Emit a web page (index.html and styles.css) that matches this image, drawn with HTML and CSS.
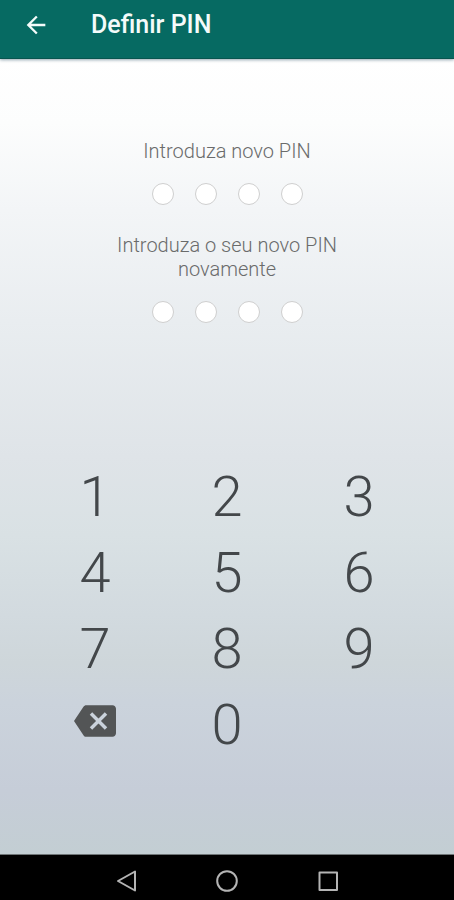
FILE: index.html
```html
<!DOCTYPE html>
<html lang="pt">
<head>
    <meta charset="UTF-8">
    <meta name="viewport" content="width=device-width, initial-scale=1.0">
    <title>Definir PIN</title>
    <link rel="stylesheet" href="styles.css">
</head>
<body>
    <header class="app-bar">
        <button type="button" class="back-button" aria-label="Voltar">
            <svg width="28" height="28" viewBox="0 0 24 24"><path d="M20 11H7.83l5.59-5.59L12 4l-8 8 8 8 1.41-1.41L7.83 13H20v-2z"/></svg>
        </button>
        <h1 class="app-title">Definir PIN</h1>
    </header>

    <main class="content">
        <form class="pin-form">
            <!-- New PIN -->
            <div class="pin-group" role="group" aria-labelledby="new-pin">
                <label class="pin-label" id="new-pin" for="new-1">Introduza novo PIN</label>
                <div class="pin-dots">
                    <input type="password" class="pin-dot" id="new-1" maxlength="1" inputmode="none">
                    <input type="password" class="pin-dot" aria-labelledby="new-pin" maxlength="1" inputmode="none">
                    <input type="password" class="pin-dot" aria-labelledby="new-pin" maxlength="1" inputmode="none">
                    <input type="password" class="pin-dot" aria-labelledby="new-pin" maxlength="1" inputmode="none">
                </div>
            </div>

            <!-- Confirm PIN -->
            <div class="pin-group" role="group" aria-labelledby="confirm-pin">
                <label class="pin-label" id="confirm-pin" for="confirm-1">Introduza o seu novo PIN novamente</label>
                <div class="pin-dots">
                    <input type="password" class="pin-dot" id="confirm-1" maxlength="1" inputmode="none">
                    <input type="password" class="pin-dot" aria-labelledby="confirm-pin" maxlength="1" inputmode="none">
                    <input type="password" class="pin-dot" aria-labelledby="confirm-pin" maxlength="1" inputmode="none">
                    <input type="password" class="pin-dot" aria-labelledby="confirm-pin" maxlength="1" inputmode="none">
                </div>
            </div>
        </form>

        <!-- Keypad -->
        <div class="keypad">
            <button type="button" class="key">1</button>
            <button type="button" class="key">2</button>
            <button type="button" class="key">3</button>
            <button type="button" class="key">4</button>
            <button type="button" class="key">5</button>
            <button type="button" class="key">6</button>
            <button type="button" class="key">7</button>
            <button type="button" class="key">8</button>
            <button type="button" class="key">9</button>
            <button type="button" class="key key-delete" aria-label="Apagar">
                <svg width="42" height="42" viewBox="0 0 24 24"><path d="M22 3H7c-.69 0-1.23.35-1.59.88L0 12l5.41 8.11c.36.53.9.89 1.59.89h15c1.1 0 2-.9 2-2V5c0-1.1-.9-2-2-2zm-3 12.59L17.59 17 14 13.41 10.41 17 9 15.59 12.59 12 9 8.41 10.41 7 14 10.59 17.59 7 19 8.41 15.41 12 19 15.59z"/></svg>
            </button>
            <button type="button" class="key">0</button>
        </div>
    </main>

    <!-- System navigation -->
    <nav class="nav-bar">
        <button type="button" class="nav-button" aria-label="Anterior">
            <svg width="24" height="24" viewBox="0 0 24 24"><path d="M21 2.5v19L4 12z"/></svg>
        </button>
        <button type="button" class="nav-button" aria-label="Início">
            <svg width="24" height="24" viewBox="0 0 24 24"><circle cx="12" cy="12" r="9.8"/></svg>
        </button>
        <button type="button" class="nav-button" aria-label="Recentes">
            <svg width="24" height="24" viewBox="0 0 24 24"><rect x="3.5" y="3.5" width="17.5" height="17.5"/></svg>
        </button>
    </nav>
</body>
</html>
```
FILE: styles.css
```css
* {
    box-sizing: border-box;
}
body {
    font-family: Roboto, "Liberation Sans", sans-serif;
    margin: 0;
    min-height: 100vh;
    display: flex;
    flex-direction: column;
    background: #000;
}
button {
    font-family: inherit;
    border: none;
    background: none;
    padding: 0;
    display: flex;
    align-items: center;
    justify-content: center;
    cursor: pointer;
}

/* Top bar */
.app-bar {
    display: flex;
    align-items: center;
    gap: 41px;
    padding: 9px 22px 17px;
    background: #066a62;
    border-bottom: 1px solid #07554f;
    box-shadow: 0 1px 3px rgba(40, 80, 100, 0.5);
    z-index: 1;
}
.back-button svg {
    fill: #f4fbfa;
}
.app-title {
    margin: 0;
    font-size: 25px;
    line-height: 32px;
    font-weight: 500;
    color: #f4fbfa;
}

.content {
    flex: 1;
    display: flex;
    flex-direction: column;
    justify-content: space-between;
    gap: 40px;
    padding: 80px 29px 93px;
    background: linear-gradient(#ffffff 0%, #fcfdfd 8%, #f3f5f7 19%, #e9edf0 33%, #dfe4e8 50%, #d9e1e4 60%, #d2dadf 70%, #ced6da 76%, #cbd3dc 81%, #c6cdd8 92%, #c3ced3 100%);
}

/* PIN fields */
.pin-form {
    display: flex;
    flex-direction: column;
    align-items: center;
    gap: 28px;
}
.pin-group {
    width: 100%;
    max-width: 240px;
    display: flex;
    flex-direction: column;
    align-items: center;
    gap: 20px;
}
.pin-label {
    font-size: 20px;
    line-height: 24px;
    font-weight: 300;
    color: #6a6b6b;
    text-align: center;
}
.pin-dots {
    display: flex;
    gap: 21px;
}
.pin-dot {
    width: 22px;
    height: 22px;
    margin: 0;
    padding: 0;
    border: 1px solid #cfcfcf;
    border-radius: 50%;
    background: #fff;
    text-align: center;
}

/* Keypad */
.keypad {
    display: grid;
    grid-template-columns: repeat(3, 1fr);
}
.key {
    height: 76px;
    padding-top: 4px;
    font-size: 56px;
    line-height: 72px;
    font-weight: 300;
    color: #43474a;
}
.key-delete {
    padding: 0 0 4px;
}
.key-delete svg {
    fill: #535556;
}

/* Bottom bar */
.nav-bar {
    display: flex;
    justify-content: center;
    gap: 77px;
    padding: 14px 0 7px;
    background: #000;
    border-top: 1px solid #6f7577;
}
.nav-button svg {
    fill: none;
    stroke: #b4b4b4;
    stroke-width: 2;
    stroke-linejoin: round;
}
```
